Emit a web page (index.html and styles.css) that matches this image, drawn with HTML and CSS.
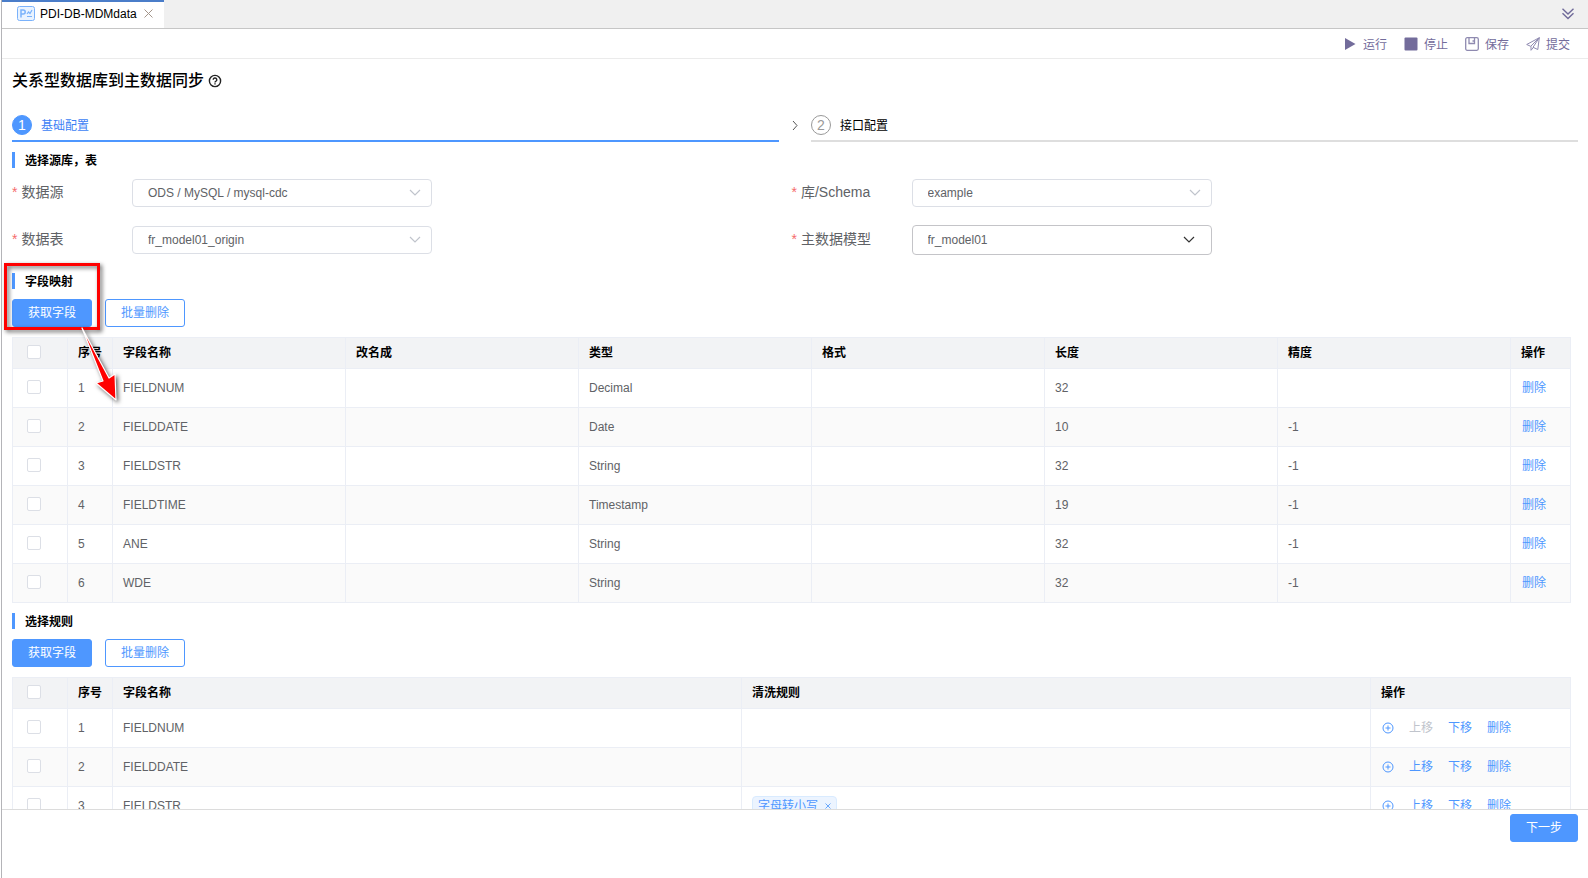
FILE: index.html
```html
<!DOCTYPE html>
<html lang="zh-CN">
<head>
  <meta charset="utf-8">
  <title>PDI-DB-MDMdata</title>
  <link rel="stylesheet" href="styles.css">
</head>
<body>
  <div class="page">
    <!-- Tabs -->
    <div class="tabs">
      <div class="tab">
        <svg class="tab-icon" width="18" height="15" viewBox="0 0 18 15" fill="none" stroke="#7ab2fb">
          <rect x="0.5" y="0.5" width="17" height="14" rx="2" fill="#e9f3ff"/>
          <path d="M4 11.5V4h2.200a1.800 1.800 0 0 1 0 4H4" stroke-width="1.5"/>
          <path d="M10 10.500h5M10 8l1.500-2 1.500 1.500L15 4" stroke-width="1.200"/>
        </svg>
        <span>PDI-DB-MDMdata</span>
        <button class="icon-button" aria-label="关闭">
          <svg width="9" height="9" viewBox="0 0 9 9" fill="none" stroke="#a3958a"><path d="M0.500 0.500l8 8M8.500 0.500l-8 8"/></svg>
        </button>
      </div>
      <button class="icon-button tabs-more" aria-label="更多">
        <svg width="12" height="12" viewBox="0 0 12 12" fill="none" stroke="#6f6a99" stroke-width="1.4"><path d="M0.500 0.800L6 6l5.500-5.200M0.500 5.300L6 10.500l5.500-5.200"/></svg>
      </button>
    </div>

    <!-- Toolbar -->
    <div class="toolbar">
      <button class="tool">
        <svg width="14" height="14" viewBox="0 0 14 14" fill="#736c9b"><path d="M2 1l10.500 6L2 13z"/></svg>
        <span>运行</span>
      </button>
      <button class="tool">
        <svg width="14" height="14" viewBox="0 0 14 14" fill="#736c9b"><rect x="0.5" y="0.5" width="13" height="13" rx="1"/></svg>
        <span>停止</span>
      </button>
      <button class="tool">
        <svg width="14" height="14" viewBox="0 0 14 14" fill="none" stroke="#8f8ab0" stroke-width="1.3"><rect x="0.7" y="0.7" width="12.6" height="12.6" rx="1.5"/><path d="M4 1v5.500h5.500V1M7.500 4h2"/></svg>
        <span>保存</span>
      </button>
      <button class="tool">
        <svg width="14" height="14" viewBox="0 0 14 14" fill="none" stroke="#8f8ab0" stroke-linejoin="round"><path d="M13.300 0.700L0.700 7.500l4 1.800zM13.300 0.700L11.800 12.500 7 10.300zM5 9.300v4L7.300 10.500"/></svg>
        <span>提交</span>
      </button>
    </div>

    <h1 class="title">
      关系型数据库到主数据同步
      <svg width="14" height="14" viewBox="0 0 14 14" fill="none" stroke="#222" stroke-width="1.4"><circle cx="7" cy="7" r="5.6"/><path d="M5.200 5.800a1.800 1.800 0 1 1 2.500 1.600q-.7.300-.7 1M7 9.300v1.200"/></svg>
    </h1>

    <!-- Steps -->
    <div class="steps">
      <div class="step active"><span class="step-num">1</span><span class="step-name">基础配置</span></div>
      <svg class="step-arrow" width="32" height="20" viewBox="0 0 32 20" fill="none" stroke="#555"><path d="M14 6l4 4.500-4 4.500"/></svg>
      <div class="step"><span class="step-num">2</span><span class="step-name">接口配置</span></div>
    </div>

    <!-- Scrolling part -->
    <div class="content">
      <h2 class="section-title">选择源库，表</h2>
      <form class="source-form">
        <div class="field">
          <label for="source"><i>*</i>数据源</label>
          <div class="select-box"><select id="source"><option>ODS / MySQL / mysql-cdc</option></select><svg width="12" height="8" viewBox="0 0 12 8"><path d="M1 1l5 5 5-5"/></svg></div>
        </div>
        <div class="field">
          <label for="schema"><i>*</i>库/Schema</label>
          <div class="select-box"><select id="schema"><option>example</option></select><svg width="12" height="8" viewBox="0 0 12 8"><path d="M1 1l5 5 5-5"/></svg></div>
        </div>
        <div class="field">
          <label for="table"><i>*</i>数据表</label>
          <div class="select-box"><select id="table"><option>fr_model01_origin</option></select><svg width="12" height="8" viewBox="0 0 12 8"><path d="M1 1l5 5 5-5"/></svg></div>
        </div>
        <div class="field">
          <label for="model"><i>*</i>主数据模型</label>
          <div class="select-box model"><select id="model"><option>fr_model01</option></select><svg width="12" height="8" viewBox="0 0 12 8"><path d="M1 1l5 5 5-5"/></svg></div>
        </div>
      </form>

      <div class="mapping">
        <h2 class="section-title">字段映射</h2>
        <div class="actions">
          <button class="btn primary">获取字段</button>
          <button class="btn">批量删除</button>
        </div>
        <!-- Highlight on the fetch button, pointing at the field list -->
        <div class="highlight"></div>
        <svg class="arrow" width="50" height="84" viewBox="0 0 50 84"><path d="M6 4L33 54l6-4 1 26-20-17 7-2z" fill="#f00" stroke="#fff" stroke-width="1.2" stroke-linejoin="round"/></svg>
      </div>
      <table class="grid">
        <colgroup><col class="col-check"><col class="col-index"><col><col><col><col><col><col><col class="col-delete"></colgroup>
        <thead>
          <tr><th><input type="checkbox" aria-label="全选"></th><th>序号</th><th>字段名称</th><th>改名成</th><th>类型</th><th>格式</th><th>长度</th><th>精度</th><th>操作</th></tr>
        </thead>
        <tbody>
          <tr><td><input type="checkbox" aria-label="1"></td><td>1</td><td>FIELDNUM</td><td></td><td>Decimal</td><td></td><td>32</td><td></td><td><a href="#">删除</a></td></tr>
          <tr><td><input type="checkbox" aria-label="2"></td><td>2</td><td>FIELDDATE</td><td></td><td>Date</td><td></td><td>10</td><td>-1</td><td><a href="#">删除</a></td></tr>
          <tr><td><input type="checkbox" aria-label="3"></td><td>3</td><td>FIELDSTR</td><td></td><td>String</td><td></td><td>32</td><td>-1</td><td><a href="#">删除</a></td></tr>
          <tr><td><input type="checkbox" aria-label="4"></td><td>4</td><td>FIELDTIME</td><td></td><td>Timestamp</td><td></td><td>19</td><td>-1</td><td><a href="#">删除</a></td></tr>
          <tr><td><input type="checkbox" aria-label="5"></td><td>5</td><td>ANE</td><td></td><td>String</td><td></td><td>32</td><td>-1</td><td><a href="#">删除</a></td></tr>
          <tr><td><input type="checkbox" aria-label="6"></td><td>6</td><td>WDE</td><td></td><td>String</td><td></td><td>32</td><td>-1</td><td><a href="#">删除</a></td></tr>
        </tbody>
      </table>

      <h2 class="section-title">选择规则</h2>
      <div class="actions">
        <button class="btn primary">获取字段</button>
        <button class="btn">批量删除</button>
      </div>
      <table class="grid">
        <colgroup><col class="col-check"><col class="col-index"><col><col><col class="col-rule"></colgroup>
        <thead>
          <tr><th><input type="checkbox" aria-label="全选"></th><th>序号</th><th>字段名称</th><th>清洗规则</th><th>操作</th></tr>
        </thead>
        <tbody>
          <tr>
            <td><input type="checkbox" aria-label="1"></td><td>1</td><td>FIELDNUM</td><td></td>
            <td><div class="row-links"><a href="#" aria-label="添加"><svg width="12" height="12" viewBox="0 0 12 12"><circle cx="6" cy="6" r="5"/><path d="M3.500 6h5M6 3.500v5"/></svg></a><a class="disabled">上移</a><a href="#">下移</a><a href="#">删除</a></div></td>
          </tr>
          <tr>
            <td><input type="checkbox" aria-label="2"></td><td>2</td><td>FIELDDATE</td><td></td>
            <td><div class="row-links"><a href="#" aria-label="添加"><svg width="12" height="12" viewBox="0 0 12 12"><circle cx="6" cy="6" r="5"/><path d="M3.500 6h5M6 3.500v5"/></svg></a><a href="#">上移</a><a href="#">下移</a><a href="#">删除</a></div></td>
          </tr>
          <tr>
            <td><input type="checkbox" aria-label="3"></td><td>3</td><td>FIELDSTR</td>
            <td><span class="tag">字母转小写<button class="icon-button" aria-label="移除"><svg width="6" height="6" viewBox="0 0 6 6" fill="none" stroke="#6aa8fb"><path d="M0.500 0.500l5 5M5.500 0.500l-5 5"/></svg></button></span></td>
            <td><div class="row-links"><a href="#" aria-label="添加"><svg width="12" height="12" viewBox="0 0 12 12"><circle cx="6" cy="6" r="5"/><path d="M3.500 6h5M6 3.500v5"/></svg></a><a href="#">上移</a><a href="#">下移</a><a href="#">删除</a></div></td>
          </tr>
        </tbody>
      </table>
    </div>

    <div class="footer">
      <button class="btn primary">下一步</button>
    </div>
  </div>
</body>
</html>
```
FILE: styles.css
```css
* {
  box-sizing: border-box;
}

body {
  margin: 0;
  background-color: #fff;
  color: #606266;
  font-family: "Liberation Sans", "Noto Sans CJK SC", sans-serif;
  font-size: 12px;
  line-height: 20px;
}

button, select {
  font: inherit;
}

a {
  color: #4e97ff;
  text-decoration: none;
}

svg {
  display: block;
  flex-shrink: 0;
}

.page {
  display: flex;
  flex-direction: column;
  height: 100vh;
  margin-left: 1px;
  border-left: 1px solid #b4b4b8;
}

.icon-button {
  display: flex;
  padding: 0;
  border: none;
  background: none;
  cursor: pointer;
}

/* Tabs */
.tabs {
  display: flex;
  justify-content: space-between;
  align-items: center;
  flex-shrink: 0;
  height: 29px;
  background-color: #f0f0f0;
  border-bottom: 1px solid #c6c6c6;
}

.tab {
  display: flex;
  align-items: center;
  height: 28px;
  padding: 0 11px 3px 15px;
  background-color: #fff;
  border-top: 2px solid #4a7dc9;
  color: #000;
}

.tab-icon {
  margin-right: 5px;
}

.tab .icon-button {
  margin-left: 7px;
}

.tabs-more {
  margin-right: 14px;
}

/* Toolbar */
.toolbar {
  display: flex;
  justify-content: flex-end;
  align-items: center;
  flex-shrink: 0;
  gap: 17px;
  height: 30px;
  padding-right: 18px;
  border-bottom: 1px solid #ebebeb;
}

.tool {
  display: flex;
  align-items: center;
  gap: 6px;
  padding: 0;
  border: none;
  background: none;
  color: #736c9b;
  cursor: pointer;
}

.tool span,
.step-name {
  padding-top: 2px;
}

.title {
  display: flex;
  align-items: center;
  gap: 4px;
  margin: 10px 0 22px 10px;
  color: #000;
  font-size: 16px;
  font-weight: 500;
  line-height: 24px;
}

/* Steps */
.steps {
  display: flex;
  padding: 0 10px;
}

.step {
  display: flex;
  flex: 1;
  align-items: center;
  gap: 9px;
  height: 27px;
  padding-bottom: 5px;
  border-bottom: 2px solid #dedede;
  color: #000;
}

.step.active {
  border-color: #4e97ff;
  color: #3d7ff5;
}

.step-num {
  width: 20px;
  height: 20px;
  border: 1px solid #999;
  border-radius: 50%;
  color: #999;
  font-size: 14px;
  line-height: 18px;
  text-align: center;
}

.active .step-num {
  background-color: #4e97ff;
  border-color: #4e97ff;
  color: #fff;
}

.content {
  flex: 1;
  min-height: 0;
  padding: 10px 17px 0 10px;
  overflow-y: auto;
  scrollbar-width: none;
}

.section-title {
  height: 16px;
  margin: 0;
  padding-left: 10px;
  border-left: 3px solid #4e97ff;
  color: #000;
  font-size: 12px;
  font-weight: bold;
  line-height: 18px;
}

/* Source form */
.source-form {
  display: grid;
  grid-template-columns: 1fr 1fr;
  row-gap: 17px;
  margin: 10px 0 18px;
}

.field {
  display: flex;
  align-items: center;
  height: 30px;
}

.field label {
  width: 120px;
  padding-bottom: 2px;
  color: #606266;
  font-size: 14px;
}

.field i {
  margin-right: 4px;
  color: #f56c6c;
  font-style: normal;
}

.select-box {
  position: relative;
  width: 300px;
}

.select-box select {
  display: block;
  width: 100%;
  height: 28px;
  padding: 0 30px 0 15px;
  border: 1px solid #dcdfe6;
  border-radius: 4px;
  background-color: #fff;
  color: #606266;
  appearance: none;
}

.select-box svg {
  position: absolute;
  top: 50%;
  right: 11px;
  margin-top: -4px;
  fill: none;
  stroke: #c0c4cc;
  stroke-width: 1.2;
  pointer-events: none;
}

.select-box.model select {
  height: 30px;
  border-color: #c4c4c8;
}

.select-box.model svg {
  right: 17px;
  stroke: #333;
}

.actions {
  display: flex;
  gap: 13px;
  margin: 10px 0;
}

.btn {
  height: 28px;
  padding: 0 15px;
  border: 1px solid #4e97ff;
  border-radius: 3px;
  background-color: #fff;
  color: #4e97ff;
  line-height: 20px;
  cursor: pointer;
}

.btn.primary {
  background-color: #4e97ff;
  color: #fff;
}

/* Highlight */
.mapping {
  position: relative;
}

.highlight {
  position: absolute;
  top: -10px;
  left: -8px;
  width: 96px;
  height: 67px;
  border: 3px solid #f00;
  filter: drop-shadow(2px 2px 2px rgba(0, 0, 0, 0.6));
}

.arrow {
  position: absolute;
  top: 51px;
  left: 64px;
  filter: drop-shadow(2px 2px 2px rgba(0, 0, 0, 0.6));
}

/* Tables */
.grid {
  width: 100%;
  margin-bottom: 10px;
  border-top: 1px solid #ebeef5;
  border-left: 1px solid #ebeef5;
  border-spacing: 0;
  table-layout: fixed;
}

.grid th,
.grid td {
  height: 39px;
  padding: 0 10px;
  border-right: 1px solid #ebeef5;
  border-bottom: 1px solid #ebeef5;
  text-align: left;
}

.grid th {
  height: 31px;
  background-color: #f2f3f5;
  color: #000;
}

.grid tbody tr:nth-child(even) {
  background-color: #fafafa;
}

.grid th:first-child,
.grid td:first-child {
  padding: 0 14px 2px;
}

.grid td:last-child > a {
  padding-left: 1px;
}

.grid input {
  display: block;
  width: 14px;
  height: 14px;
  margin: 0;
  border: 1px solid #dcdfe6;
  border-radius: 2px;
  background-color: #fff;
  appearance: none;
}

.col-check {
  width: 55px;
}

.col-index {
  width: 45px;
}

.col-delete {
  width: 60px;
}

.col-rule {
  width: 200px;
}

.row-links {
  display: flex;
  align-items: center;
  gap: 15px;
  padding-left: 1px;
}

.row-links svg {
  fill: none;
  stroke: #4e97ff;
}

.row-links .disabled {
  color: #c0c4cc;
}

.tag {
  display: inline-flex;
  align-items: center;
  gap: 7px;
  height: 20px;
  padding: 0 5px;
  border: 1px solid #d9ebff;
  border-radius: 4px;
  background-color: #ecf4ff;
  color: #4e97ff;
  vertical-align: middle;
}

/* Footer */
.footer {
  display: flex;
  justify-content: flex-end;
  flex-shrink: 0;
  height: 69px;
  padding: 4px 10px;
  border-top: 1px solid #dcdcdc;
}
```
